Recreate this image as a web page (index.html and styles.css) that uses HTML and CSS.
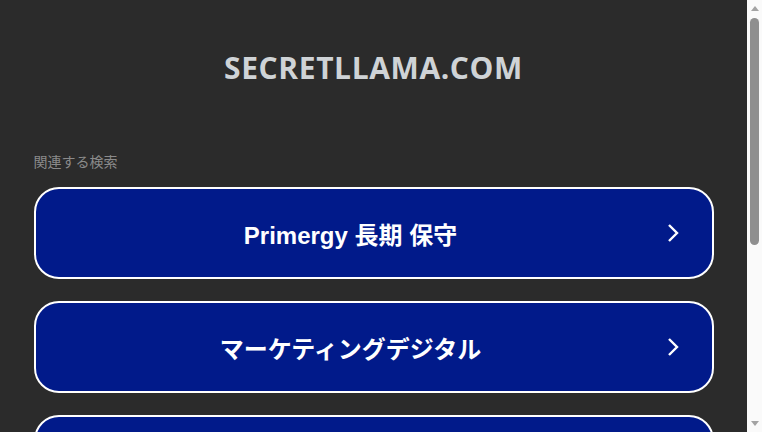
FILE: index.html
```html
<!DOCTYPE html>
<html lang="ja">
<head>
  <meta charset="UTF-8" />
  <meta name="viewport" content="width=device-width, initial-scale=1.0" />
  <title>secretllama.com</title>
  <link rel="stylesheet" href="styles.css">
</head>
<body>
  <div id="page">
    <h1 class="domain">SECRETLLAMA.COM</h1>
    <div class="related">
      <div class="related-title">関連する検索</div>
      <a class="search-link" href="#"><span>Primergy 長期 保守</span><svg class="chev" viewBox="0 0 14 20"><path d="M3 2 L11 10 L3 18" /></svg></a>
      <a class="search-link" href="#"><span>マーケティングデジタル</span><svg class="chev" viewBox="0 0 14 20"><path d="M3 2 L11 10 L3 18" /></svg></a>
      <a class="search-link" href="#"><span>クラウドサーバー</span><svg class="chev" viewBox="0 0 14 20"><path d="M3 2 L11 10 L3 18" /></svg></a>
      <a class="search-link" href="#"><span>データ分析ツール</span><svg class="chev" viewBox="0 0 14 20"><path d="M3 2 L11 10 L3 18" /></svg></a>
      <a class="search-link" href="#"><span>オンライン学習</span><svg class="chev" viewBox="0 0 14 20"><path d="M3 2 L11 10 L3 18" /></svg></a>
    </div>
  </div>

  <!-- window scrollbar, drawn because the headless shot hides the real one -->
  <div class="scrollbar">
    <div class="arrow up"></div>
    <div class="track"><div class="thumb"></div></div>
    <div class="arrow down"></div>
  </div>
</body>
</html>
```
FILE: styles.css
```css
body, html {
  margin: 0;
  padding: 0;
  background: #2b2b2b;
}
#page {
  display: flex;
  flex-direction: column;
  align-items: center;
  margin-right: 15px;
  padding-bottom: 20px;
}
.domain {
  margin: 0;
  padding-top: 47px;
  font-family: "Open Sans", sans-serif;
  font-size: 30px;
  font-weight: 700;
  letter-spacing: 0.6px;
  line-height: 42px;
  color: #cfd3d6;
}
.related {
  width: 680px;
  margin-top: 62px;
  display: flex;
  flex-direction: column;
  gap: 22px;
}
.related-title {
  font-family: "Noto Sans CJK JP", sans-serif;
  font-size: 14px;
  line-height: 20px;
  color: #8a8a8a;
  margin-bottom: -6px;
}
.search-link {
  box-sizing: border-box;
  display: flex;
  align-items: center;
  height: 92px;
  padding-right: 32px;
  border: 2px solid #fff;
  border-radius: 25px;
  background: #011a8a;
  color: #fff;
  text-decoration: none;
  font-family: "Liberation Sans", "Noto Sans CJK JP", sans-serif;
  font-size: 24px;
  font-weight: 700;
}
.search-link span {
  flex: 1;
  text-align: center;
}
.chev {
  flex-shrink: 0;
  width: 14px;
  height: 20px;
}
.chev path {
  fill: none;
  stroke: #fff;
  stroke-width: 2.4;
}
.scrollbar {
  position: fixed;
  top: 0;
  right: 0;
  width: 15px;
  height: 100vh;
  background: #fafafa;
  display: flex;
  flex-direction: column;
  align-items: center;
}
.arrow {
  width: 0;
  height: 0;
  border-left: 4px solid transparent;
  border-right: 4px solid transparent;
}
.arrow.up {
  margin-top: 6px;
  border-bottom: 5px solid #a3a3a3;
}
.arrow.down {
  margin-bottom: 6px;
  border-top: 5px solid #a3a3a3;
}
.track {
  flex: 1;
  width: 100%;
  display: flex;
  justify-content: center;
  padding-top: 7px;
}
.thumb {
  width: 9px;
  height: 227px;
  border-radius: 5px;
  background: #8f8f8f;
}
```
